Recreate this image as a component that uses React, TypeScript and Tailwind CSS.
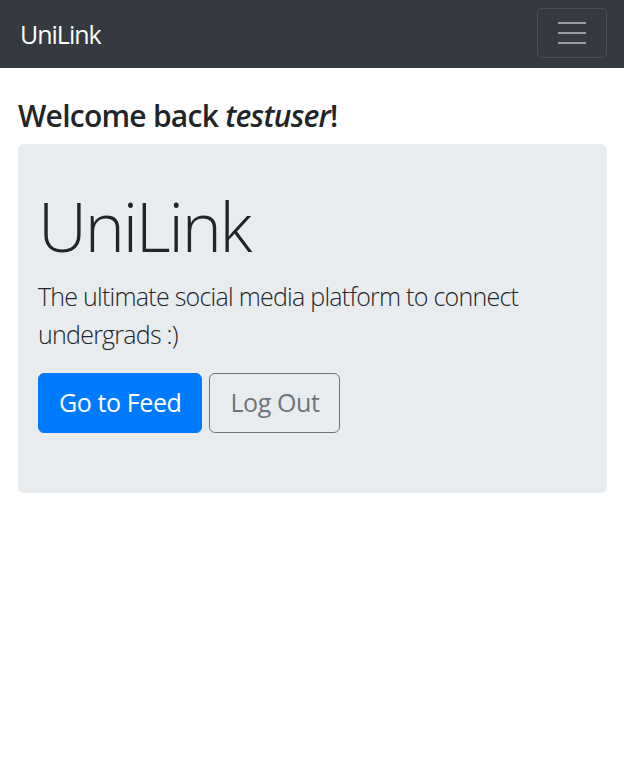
import React from "react";

const font = { fontFamily: '"Open Sans", "Noto Sans", sans-serif' };

const Navbar = () => (
  <nav className="flex h-[68px] items-center justify-between bg-[#343a40] pl-5 pr-[17px]">
    <a className="text-[25px] leading-[38px] tracking-[-1px] text-white">UniLink</a>
    <button className="mb-[2px] flex h-[50px] w-[70px] flex-col items-center justify-center gap-[7.5px] rounded-[5px] border border-white/10">
      <span className="h-[2.5px] w-[28px] bg-white/50" />
      <span className="h-[2.5px] w-[28px] bg-white/50" />
      <span className="h-[2.5px] w-[28px] bg-white/50" />
    </button>
  </nav>
);

const Jumbotron = () => (
  <div className="rounded-[6px] bg-[#e9ecef] px-5 py-10">
    <h1 className="mb-[10px] text-[68px] font-light leading-[84px] tracking-[-2.2px] text-[#212529]">UniLink</h1>
    <p className="mb-5 text-[25px] font-light leading-[37.5px] tracking-[-0.75px] text-[#212529]">
      The ultimate social media platform to connect undergrads :)
    </p>
    <div className="mb-5 flex gap-[7px]">
      <button className="h-[60px] rounded-[6px] border border-[#007bff] bg-[#007bff] px-5 text-[25px] tracking-[-0.4px] text-white">
        Go to Feed
      </button>
      <button className="h-[60px] rounded-[6px] border border-[#6c757d] px-5 text-[25px] tracking-[-0.4px] text-[#6c757d]">
        Log Out
      </button>
    </div>
  </div>
);

export default function App() {
  return (
    <div className="min-h-[757px] bg-white" style={font}>
      <Navbar />
      <div className="pl-[18px] pr-[17px] pt-[30px]">
        <h4 className="mb-[10px] text-[30px] font-semibold leading-[36px] tracking-[-0.75px] text-[#212529]">
          Welcome back <em>testuser</em>!
        </h4>
        <Jumbotron />
      </div>
    </div>
  );
}
